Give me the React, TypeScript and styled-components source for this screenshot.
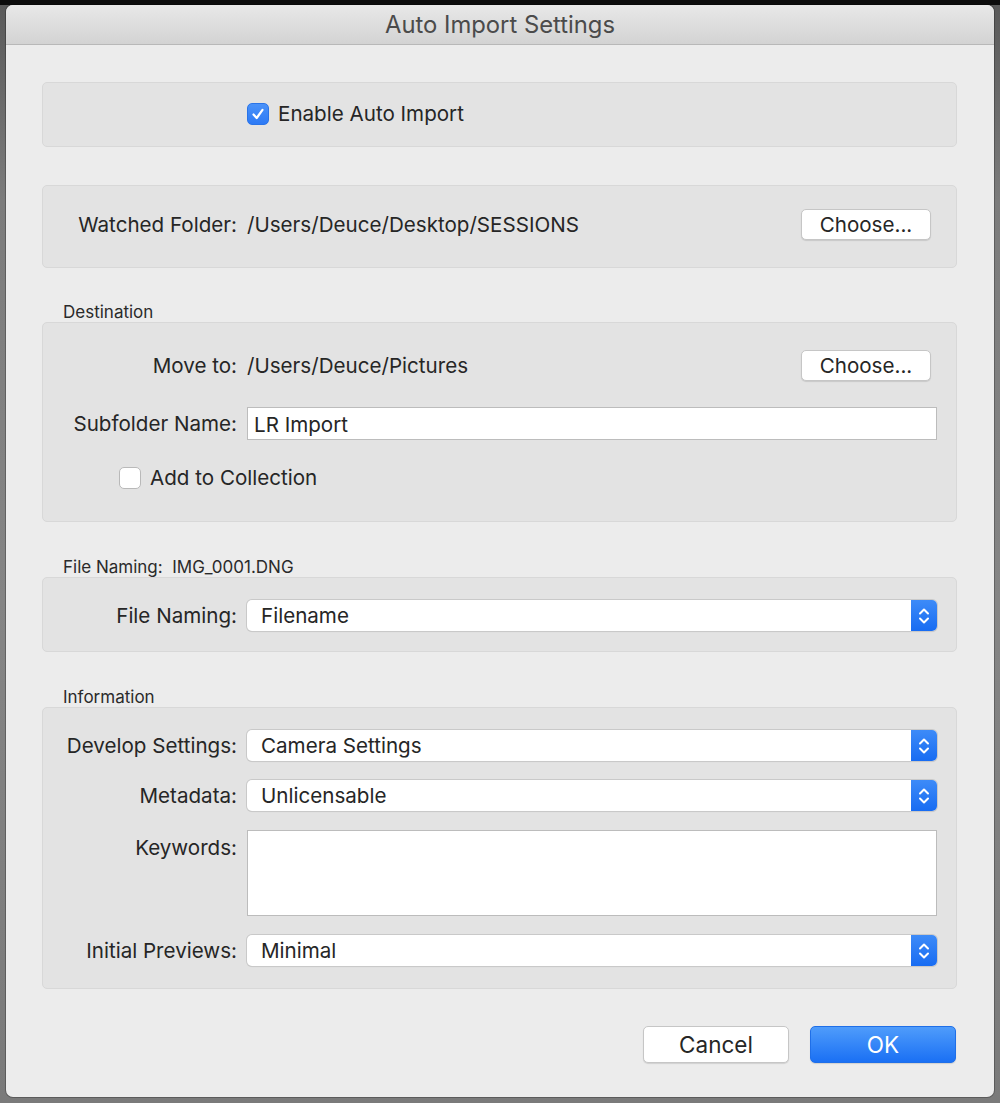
import React from 'react';
import styled, { createGlobalStyle } from 'styled-components';

const Global = createGlobalStyle`
  html, body {
    margin: 0;
    padding: 0;
  }
  body {
    background: linear-gradient(#0c0c0c 0, #0c0c0c 5px, #5a5a5a 5px, #7c7c7c 200px, #858585 600px, #7a7a7a 100%);
    font-family: Inter, "Noto Sans", "Liberation Sans", sans-serif;
    color: #262626;
    height: 1103px;
    overflow: hidden;
  }
`;

const Window = styled.div`
  width: 988px;
  height: 1092px;
  margin: 5px auto 0;
  background: #ececec;
  border-radius: 7px;
  overflow: hidden;
  display: flex;
  flex-direction: column;
  box-shadow: 0 0 0 1px rgba(0, 0, 0, 0.25);
`;

const TitleBar = styled.div`
  height: 39px;
  flex: none;
  background: linear-gradient(#e8e8e8, #d3d3d3);
  border-bottom: 1px solid #b8b8b8;
  display: flex;
  align-items: center;
  justify-content: center;
  font-size: 23.8px;
  color: #4b4b4b;
`;

const Body = styled.div`
  padding: 37px 37px 0 36px;
  display: flex;
  flex-direction: column;
`;

const Panel = styled.div<{ $pt: number; $pb: number; $gap?: number }>`
  background: #e3e3e3;
  border: 1px solid #d8d8d8;
  border-radius: 5px;
  padding: ${(p) => p.$pt}px 19px ${(p) => p.$pb}px 0;
  display: flex;
  flex-direction: column;
  gap: ${(p) => p.$gap ?? 0}px;
`;

const Spacer = styled.div<{ $h: number }>`
  height: ${(p) => p.$h}px;
`;

const SectionLabel = styled.div<{ $mt: number }>`
  font-size: 17px;
  color: #2a2a2a;
  margin: ${(p) => p.$mt}px 0 0 21px;
  height: 24px;
  line-height: 28px;
  white-space: pre;
`;

const Row = styled.div<{ $h: number; $top?: boolean }>`
  display: grid;
  grid-template-columns: 194px 1fr;
  column-gap: 10px;
  align-items: ${(p) => (p.$top ? 'start' : 'center')};
  min-height: ${(p) => p.$h}px;
`;

const Label = styled.div<{ $pt?: number }>`
  text-align: right;
  font-size: 20.6px;
  white-space: nowrap;
  padding-top: ${(p) => p.$pt ?? 0}px;
`;

const Value = styled.div`
  display: flex;
  align-items: center;
  justify-content: space-between;
  font-size: 20.6px;
`;

const Button = styled.button<{ $primary?: boolean; $w: number; $h: number; $fs: number }>`
  width: ${(p) => p.$w}px;
  height: ${(p) => p.$h}px;
  font-family: inherit;
  font-size: ${(p) => p.$fs}px;
  border-radius: 5px;
  padding: 0;
  color: ${(p) => (p.$primary ? '#fff' : '#262626')};
  background: ${(p) => (p.$primary ? 'linear-gradient(#4f9cfb, #1a70f4)' : '#fff')};
  border: 1px solid ${(p) => (p.$primary ? '#1f6fe8' : '#c6c6c6')};
  box-shadow: 0 1px 1px rgba(0, 0, 0, 0.12);
`;

const ChooseButton = styled(Button)`
  margin-right: 6px;
`;

const Check = styled.span<{ $checked?: boolean }>`
  width: 22px;
  height: 22px;
  box-sizing: border-box;
  border-radius: 5px;
  display: inline-flex;
  align-items: center;
  justify-content: center;
  background: ${(p) => (p.$checked ? 'linear-gradient(#4a92f9, #2d7af5)' : '#fff')};
  border: 1px solid ${(p) => (p.$checked ? '#2a74e8' : '#b9b9b9')};
  flex: none;
`;

const CheckRow = styled.label<{ $indent: number }>`
  display: flex;
  align-items: center;
  gap: 9px;
  font-size: 20.6px;
  line-height: 23px;
  padding-left: ${(p) => p.$indent}px;
`;

const TextInput = styled.div<{ $h: number }>`
  height: ${(p) => p.$h}px;
  box-sizing: border-box;
  background: #fff;
  border: 1px solid #bcbcbc;
  font-size: 20.6px;
  padding: 2px 6px 0;
  display: flex;
  align-items: ${(p) => (p.$h > 40 ? 'flex-start' : 'center')};
`;

const Select = styled.div`
  height: 31px;
  box-sizing: border-box;
  background: #fff;
  border-radius: 5px;
  box-shadow: 0 0 0 1px #c9c9c9, 0 1px 1px rgba(0, 0, 0, 0.12);
  display: flex;
  align-items: center;
  justify-content: space-between;
  font-size: 20.6px;
  padding-left: 14px;
  overflow: hidden;
`;

const Stepper = styled.span`
  width: 26px;
  height: 31px;
  background: linear-gradient(#3d8bf8, #186cf2);
  display: flex;
  align-items: center;
  justify-content: center;
  flex: none;
`;

const Footer = styled.div`
  display: flex;
  justify-content: flex-end;
  gap: 21px;
  padding: 37px 1px 0 0;
`;

function CheckMark() {
  return (
    <svg width="14" height="14" viewBox="0 0 14 14">
      <path d="M2.5 7.5 L5.7 11 L11.5 2.8" fill="none" stroke="#fff" strokeWidth="2.2" strokeLinecap="round" strokeLinejoin="round" />
    </svg>
  );
}

function Popup({ value }: { value: string }) {
  return (
    <Select>
      <span>{value}</span>
      <Stepper>
        <svg width="14" height="22" viewBox="0 0 14 22">
          <path d="M3 8.5 L7 4.5 L11 8.5" fill="none" stroke="#fff" strokeWidth="2" strokeLinecap="round" strokeLinejoin="round" />
          <path d="M3 13.5 L7 17.5 L11 13.5" fill="none" stroke="#fff" strokeWidth="2" strokeLinecap="round" strokeLinejoin="round" />
        </svg>
      </Stepper>
    </Select>
  );
}

function App() {
  return (
    <>
      <Global />
      <Window>
        <TitleBar>Auto Import Settings</TitleBar>
        <Body>
          <Panel $pt={19} $pb={21}>
            <Row $h={23}>
              <span />
              <CheckRow $indent={0}>
                <Check $checked><CheckMark /></Check>
                Enable Auto Import
              </CheckRow>
            </Row>
          </Panel>

          <Spacer $h={38} />

          <Panel $pt={23} $pb={27}>
            <Row $h={31}>
              <Label>Watched Folder:</Label>
              <Value>
                <span>/Users/Deuce/Desktop/SESSIONS</span>
                <ChooseButton $w={130} $h={31} $fs={20.6}>Choose...</ChooseButton>
              </Value>
            </Row>
          </Panel>

          <SectionLabel $mt={30}>Destination</SectionLabel>
          <Panel $pt={27} $pb={32} $gap={26}>
            <Row $h={31}>
              <Label>Move to:</Label>
              <Value>
                <span>/Users/Deuce/Pictures</span>
                <ChooseButton $w={130} $h={31} $fs={20.6}>Choose...</ChooseButton>
              </Value>
            </Row>
            <Row $h={33}>
              <Label>Subfolder Name:</Label>
              <TextInput $h={33}>LR Import</TextInput>
            </Row>
            <CheckRow $indent={76}>
              <Check />
              Add to Collection
            </CheckRow>
          </Panel>

          <SectionLabel $mt={31}>{'File Naming:  IMG_0001.DNG'}</SectionLabel>
          <Panel $pt={22} $pb={20}>
            <Row $h={31}>
              <Label>File Naming:</Label>
              <Popup value="Filename" />
            </Row>
          </Panel>

          <SectionLabel $mt={31}>Information</SectionLabel>
          <Panel $pt={22} $pb={22} $gap={19}>
            <Row $h={31}>
              <Label>Develop Settings:</Label>
              <Popup value="Camera Settings" />
            </Row>
            <Row $h={31}>
              <Label>Metadata:</Label>
              <Popup value="Unlicensable" />
            </Row>
            <Row $h={86} $top>
              <Label $pt={5}>Keywords:</Label>
              <TextInput $h={86} />
            </Row>
            <Row $h={31}>
              <Label>Initial Previews:</Label>
              <Popup value="Minimal" />
            </Row>
          </Panel>

          <Footer>
            <Button $w={146} $h={37} $fs={22.5}>Cancel</Button>
            <Button $primary $w={146} $h={37} $fs={22.5}>OK</Button>
          </Footer>
        </Body>
      </Window>
    </>
  );
}

export default App;
